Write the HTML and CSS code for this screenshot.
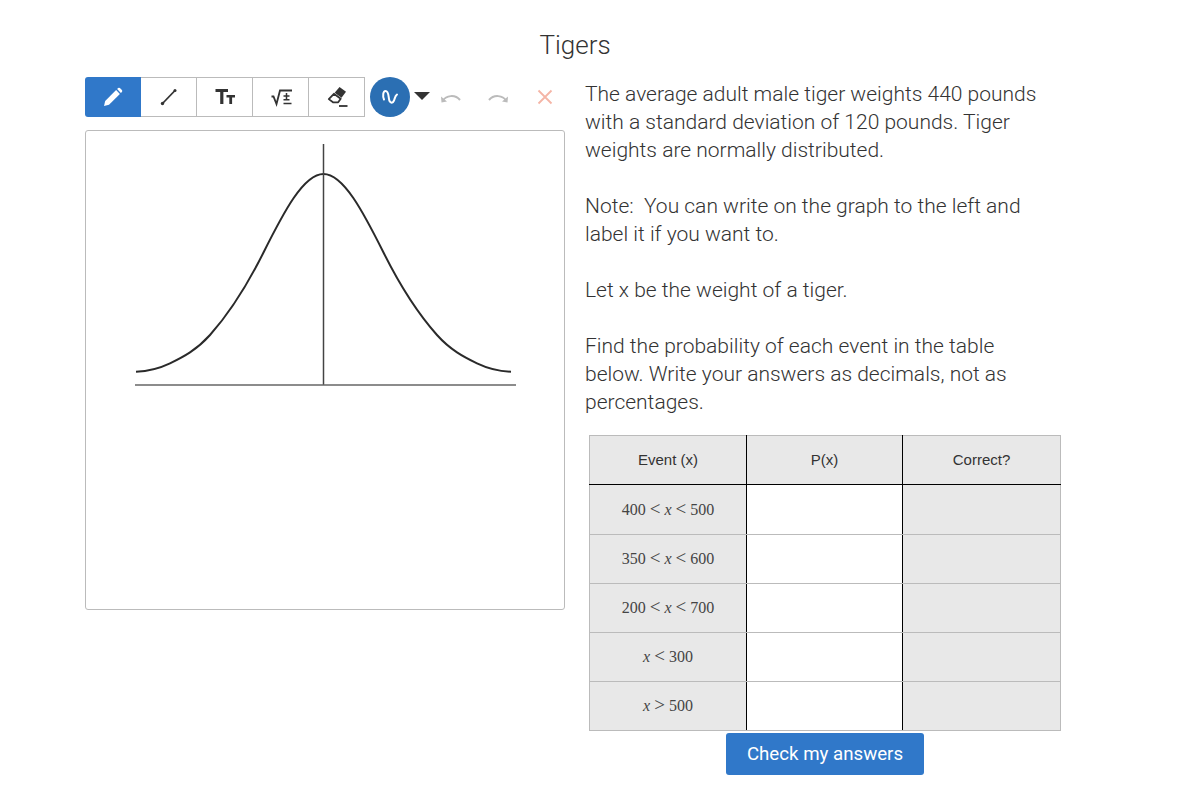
FILE: index.html
```html
<!DOCTYPE html>
<html lang="en">
<head>
  <meta charset="UTF-8" />
  <title>Tigers</title>
  <link rel="stylesheet" href="styles.css">
</head>
<body>
  <main class="page">
    <h1 class="title">Tigers</h1>
    <div class="columns">
      <section class="sketch">
        <div class="toolbar">
          <div class="tools">
            <button class="tool active" aria-label="Pen">
              <svg width="24" height="24" viewBox="0 0 24 24"><path d="M3 21l1.200-5L15.100 5.100l3.800 3.800L8 19.800z" fill="#fff"/><path d="M16.100 4.100l1-1a1.300 1.300 0 0 1 1.800 0l2 2a1.300 1.300 0 0 1 0 1.800l-1 1z" fill="#fff"/></svg>
            </button>
            <button class="tool" aria-label="Line">
              <svg width="24" height="24" viewBox="0 0 24 24"><path d="M5.500 18.500L18 5.500" stroke="#333" stroke-width="1.800"/><circle cx="5.500" cy="18.500" r="1.700" fill="#333"/><circle cx="18" cy="5.500" r="1.500" fill="#333"/></svg>
            </button>
            <button class="tool" aria-label="Text">
              <svg width="24" height="24" viewBox="0 0 24 24"><path d="M2.500 4h12.500v3h-4.600v12H7.200V7H2.500zM13.500 10h8.500v2.400h-2.900v6.600h-2.800v-6.600h-2.800z" fill="#333"/></svg>
            </button>
            <button class="tool" aria-label="Math">
              <svg width="24" height="24" viewBox="0 0 24 24"><path d="M2.500 11.500h2l3 7.500 3.500-13.500h12" fill="none" stroke="#333" stroke-width="1.800"/><path d="M17.500 8v6M14.500 11h6M14.500 14.800h6M14.500 18.500h8" stroke="#333" stroke-width="1.500"/></svg>
            </button>
            <button class="tool" aria-label="Eraser">
              <svg width="24" height="24" viewBox="0 0 24 24"><path d="M14.500 2l6.500 4.800-4.500 6-6.800-5z" fill="#333"/><path d="M8.900 8.800l6.800 5-2.500 3.500H8l-4.200-3.200z" fill="#fff" stroke="#333" stroke-width="1.800" stroke-linejoin="round"/><path d="M14 21h8.500" stroke="#333" stroke-width="1.800"/></svg>
            </button>
          </div>
          <button class="stroke-btn" aria-label="Stroke">
            <svg width="24" height="24" viewBox="0 0 24 24"><path d="M6 14.500C4.500 11 5 6 7.500 6C10.500 6 10.500 11 11 14C11.500 18 14.500 19 16 15.500C16.800 13.500 17 11 19 9.500" fill="none" stroke="#fff" stroke-width="2" stroke-linecap="round"/></svg>
          </button>
          <span class="caret"></span>
          <button class="plain" aria-label="Undo">
            <svg width="22" height="14" viewBox="0 0 22 14"><path d="M3 10.500C6 5.500 15 4 20 10" fill="none" stroke="#bbb" stroke-width="2"/><path d="M1 6.500l.5 6 5.500-1z" fill="#bbb"/></svg>
          </button>
          <button class="plain redo" aria-label="Redo">
            <svg width="22" height="14" viewBox="0 0 22 14"><path d="M19 10.500C16 5.500 7 4 2 10" fill="none" stroke="#bbb" stroke-width="2"/><path d="M21 6.500l-.5 6-5.500-1z" fill="#bbb"/></svg>
          </button>
          <button class="plain clear" aria-label="Clear">
            <svg width="16" height="16" viewBox="0 0 16 16"><path d="M1.500 1.500l13 13M14.500 1.500l-13 13" stroke="#f4b5a6" stroke-width="1.800"/></svg>
          </button>
        </div>
        <div class="canvas">
          <svg width="478" height="478" viewBox="86 131 478 478">
            <path class="curve" d="M136 371.800C147.300 371.200 158.700 368.700 170 363.300C183.300 356.900 196.700 349.900 210 335C227.800 315 245.700 288.200 263.500 252.500C283.500 212.500 303.500 174 323.500 174C343.500 174 363.500 212.500 383.500 252.500C401.300 288.200 419.200 315 437 335C450.300 349.900 463.700 356.900 477 363.300C488.300 368.700 499.700 371.200 511 371.800"/>
            <path class="axis" d="M323.500 144V385"/>
            <path class="base" d="M135 385H516"/>
          </svg>
        </div>
      </section>
      <section class="question">
        <p>The average adult male tiger weights 440 pounds with a standard deviation of 120 pounds. Tiger weights are normally distributed.</p>
        <p>Note:&nbsp; You can write on the graph to the left and label it if you want to.</p>
        <p>Let x be the weight of a tiger.</p>
        <p>Find the probability of each event in the table below. Write your answers as decimals, not as percentages.</p>
        <table class="answers">
          <colgroup>
            <col class="col-event">
            <col class="col-prob">
            <col>
          </colgroup>
          <thead>
            <tr><th>Event (x)</th><th>P(x)</th><th>Correct?</th></tr>
          </thead>
          <tbody>
            <tr><td class="math">400 <span class="op">&lt;</span> <i>x</i> <span class="op">&lt;</span> 500</td><td class="blank"></td><td></td></tr>
            <tr><td class="math">350 <span class="op">&lt;</span> <i>x</i> <span class="op">&lt;</span> 600</td><td class="blank"></td><td></td></tr>
            <tr><td class="math">200 <span class="op">&lt;</span> <i>x</i> <span class="op">&lt;</span> 700</td><td class="blank"></td><td></td></tr>
            <tr><td class="math"><i>x</i> <span class="op">&lt;</span> 300</td><td class="blank"></td><td></td></tr>
            <tr><td class="math"><i>x</i> <span class="op">&gt;</span> 500</td><td class="blank"></td><td></td></tr>
          </tbody>
        </table>
        <div class="actions">
          <button class="check">Check my answers</button>
        </div>
      </section>
    </div>
  </main>
</body>
</html>
```

FILE: styles.css
```css
body {
  margin: 0;
  background: white;
  color: #333;
  font-family: Roboto, Arial, sans-serif;
}

button {
  padding: 0;
  border: 0;
  background: none;
  font: inherit;
}

.page {
  width: 980px;
  margin-left: 85px;
  padding-top: 29px;
}

.title {
  margin: 0 0 16px;
  font-size: 26px;
  font-weight: 300;
  line-height: 32px;
  text-align: center;
}

.columns {
  display: flex;
  gap: 20px;
}

.sketch {
  width: 480px;
  flex: none;
}

.toolbar {
  display: flex;
  align-items: center;
  height: 40px;
  margin-bottom: 13px;
}

.tools {
  display: flex;
}

.tool {
  display: flex;
  align-items: center;
  justify-content: center;
  width: 56px;
  height: 40px;
  border: 1px solid #bbb;
  border-left: 0;
}

.tool.active {
  background: #3078c9;
  border: 0;
  border-radius: 3px 0 0 3px;
}

.stroke-btn {
  display: flex;
  align-items: center;
  justify-content: center;
  width: 40px;
  height: 40px;
  margin-left: 5px;
  border-radius: 50%;
  background: #2b6fb3;
}

.caret {
  width: 0;
  height: 0;
  margin: -2px 0 0 4px;
  border-left: 8px solid transparent;
  border-right: 8px solid transparent;
  border-top: 8px solid #333;
}

.plain {
  display: flex;
  margin-left: 10px;
}

.redo {
  margin-left: 25px;
}

.clear {
  margin-left: 28px;
}

.canvas {
  height: 478px;
  border: 1px solid #bbb;
  border-radius: 3px;
}

.canvas svg {
  display: block;
}

.curve {
  fill: none;
  stroke: #2a2a2a;
  stroke-width: 2;
}

.axis {
  fill: none;
  stroke: #444;
  stroke-width: 1.500;
}

.base {
  fill: none;
  stroke: #666;
  stroke-width: 1.500;
}

.question {
  width: 480px;
  padding-top: 3px;
  font-size: 21px;
  font-weight: 300;
  line-height: 28px;
}

.question p {
  width: 460px;
  margin: 0 0 28px;
}

.answers {
  width: 472px;
  margin: -9px 0 0 4px;
  border-collapse: collapse;
  table-layout: fixed;
  font-family: "Liberation Sans", Arial, sans-serif;
  font-size: 15px;
  font-weight: normal;
  line-height: 20px;
}

.col-event {
  width: 157px;
}

.col-prob {
  width: 156px;
}

.answers th,
.answers td {
  height: 48px;
  padding: 0;
  border: 1px solid #bbb;
  background: #e8e8e8;
  font-weight: normal;
  text-align: center;
}

.answers th {
  border-bottom: 1px solid #000;
}

.answers tbody tr:first-child td {
  height: 49px;
}

.answers th:nth-child(1),
.answers td:nth-child(1),
.answers th:nth-child(2),
.answers td:nth-child(2) {
  border-right: 1px solid #000;
}

.answers td.blank {
  background: white;
}

.answers td.math {
  color: #444;
  font-family: "Liberation Serif", serif;
  font-size: 16px;
}

.op {
  font-size: 19px;
  line-height: 16px;
}

.actions {
  display: flex;
  justify-content: center;
  width: 472px;
  margin-top: 2px;
  padding-left: 4px;
}

.check {
  width: 198px;
  height: 42px;
  border-radius: 3px;
  background: #3078c9;
  color: white;
  font-size: 18.700px;
  font-weight: normal;
}
```
